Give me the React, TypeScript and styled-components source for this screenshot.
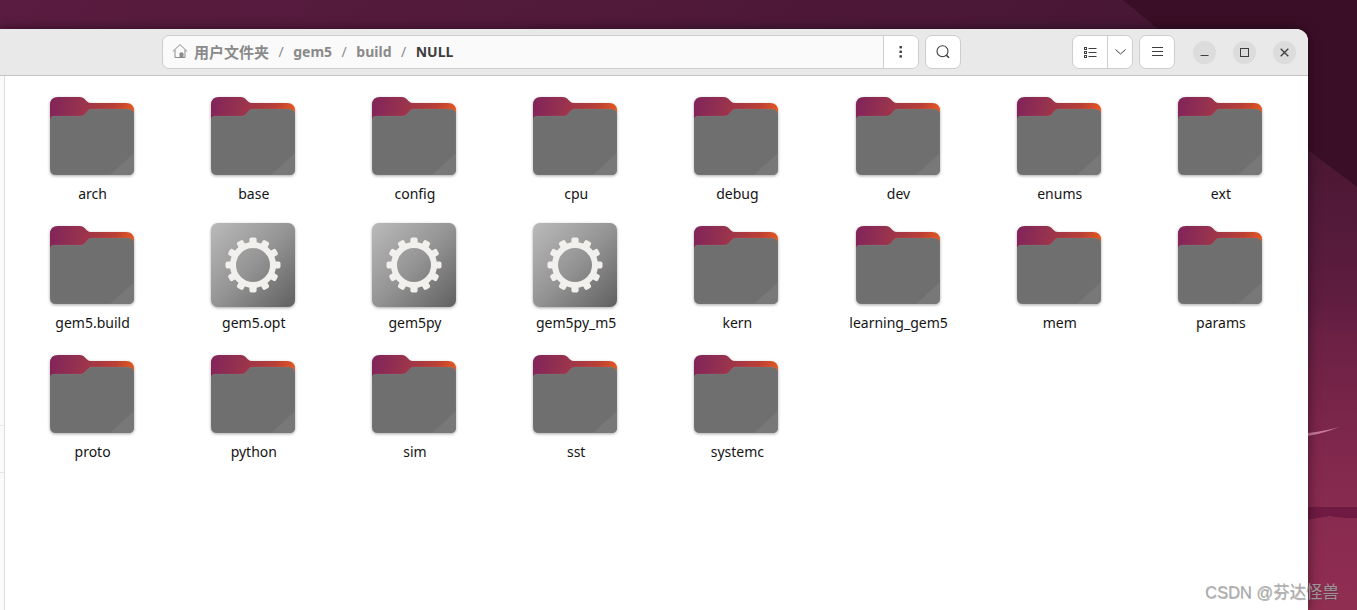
import React from "react";
import styled, { createGlobalStyle } from "styled-components";

const Global = createGlobalStyle`
  html, body { margin: 0; padding: 0; width: 100%; height: 100%; overflow: hidden; }
  #root { width: 100%; height: 100%; }
`;

const Desktop = styled.div`
  position: relative;
  width: 1357px;
  height: 610px;
  overflow: hidden;
  display: flex;
  align-items: flex-start;
  padding-top: 29px;
  box-sizing: border-box;
  background: #3d0f28;
  font-family: "Noto Sans", "Noto Sans CJK SC", sans-serif;
`;

const Wallpaper = styled.svg`
  position: absolute;
  inset: 0;
  width: 1357px;
  height: 610px;
`;

const Window = styled.div`
  position: relative;
  width: 1308px;
  height: 581px;
  flex: none;
  display: flex;
  flex-direction: column;
  background: #fff;
  border-top-right-radius: 12px;
  overflow: hidden;
  box-shadow: 0 0 12px rgba(0, 0, 0, 0.5);
`;

const Header = styled.header`
  height: 47px;
  flex: none;
  display: flex;
  align-items: center;
  box-sizing: border-box;
  padding: 0 11px 0 162px;
  background: #e9e9e9;
  border-bottom: 1px solid #c4c4c4;
`;

const PathBar = styled.div`
  width: 757px;
  height: 34px;
  box-sizing: border-box;
  display: flex;
  border: 1px solid #cdcdcd;
  border-radius: 7px;
  overflow: hidden;
  background: #fafafa;
`;

const Crumbs = styled.div`
  flex: 1;
  display: flex;
  align-items: center;
  padding: 0 0 2px 9px;
  font-size: 14px;
  font-weight: 700;
  color: #8a8a8a;
`;

const HomeIcon = styled.svg`
  width: 16px;
  height: 16px;
  margin-right: 6px;
  flex: none;
`;

const HomeName = styled.span`
  font-size: 15px;
`;

const Sep = styled.span`
  font-weight: 400;
  margin: 0 9.5px;
`;

const Current = styled.span`
  color: #3d3d3d;
`;

const PathMenu = styled.div`
  width: 34px;
  flex: none;
  display: flex;
  align-items: center;
  justify-content: center;
  background: #fff;
  border-left: 1px solid #cdcdcd;
`;

const ToolButton = styled.div<{ $w: number; $ml: number }>`
  width: ${(p) => p.$w}px;
  margin-left: ${(p) => p.$ml}px;
  height: 34px;
  flex: none;
  box-sizing: border-box;
  display: flex;
  align-items: center;
  justify-content: center;
  background: #fff;
  border: 1px solid #cdcdcd;
  border-radius: 7px;
`;

const Split = styled.div`
  width: 61px;
  margin-left: 111px;
  height: 34px;
  flex: none;
  box-sizing: border-box;
  display: flex;
  background: #fff;
  border: 1px solid #cdcdcd;
  border-radius: 7px;
  overflow: hidden;
`;

const SplitPart = styled.div<{ $w: number; $line?: boolean }>`
  width: ${(p) => p.$w}px;
  flex: none;
  box-sizing: border-box;
  display: flex;
  align-items: center;
  justify-content: center;
  border-right: ${(p) => (p.$line ? "1px solid #cdcdcd" : "none")};
`;

const WinButton = styled.div<{ $ml: number }>`
  width: 23px;
  height: 23px;
  margin-left: ${(p) => p.$ml}px;
  flex: none;
  border-radius: 50%;
  background: #dcdcdc;
  display: flex;
  align-items: center;
  justify-content: center;
`;

const Body = styled.div`
  flex: 1;
  display: flex;
  min-height: 0;
`;

const Sidebar = styled.aside`
  width: 5px;
  flex: none;
  box-sizing: border-box;
  background: #fafafa;
  border-right: 1px solid #dedede;
  display: flex;
  flex-direction: column;
  padding-top: 349px;
`;

const SideRow = styled.div`
  height: 47px;
  flex: none;
  box-sizing: border-box;
  border-top: 1px solid #e6e6e6;
`;

const Grid = styled.main`
  flex: 1;
  display: grid;
  grid-template-columns: repeat(8, 161.2px);
  grid-auto-rows: 129px;
  align-content: start;
  padding: 17px 0 0 7px;
`;

const Item = styled.div`
  display: flex;
  flex-direction: column;
  align-items: center;
`;

const IconSlot = styled.svg`
  width: 92px;
  height: 88px;
  flex: none;
  display: block;
  overflow: visible;
  filter: drop-shadow(0 1px 1.5px rgba(0, 0, 0, 0.35));
`;

const Label = styled.span`
  margin-top: 3px;
  font-size: 14px;
  line-height: 20px;
  color: #141414;
  white-space: nowrap;
`;

const Watermark = styled.div`
  position: absolute;
  left: 1205px;
  top: 581px;
  font-family: "Liberation Sans", "Noto Sans CJK SC", sans-serif;
  font-size: 16.5px;
  line-height: 22px;
  color: rgba(165, 165, 165, 0.85);
  text-shadow: 0.5px 0.5px 0.5px rgba(60, 60, 60, 0.35);
  white-space: nowrap;
`;

const FolderIcon = () => (
  <IconSlot viewBox="1 0 92 88">
    <path
      d="M4 12 Q4 4 12 4 H34 Q36.5 4 38 5.5 L41 8.5 Q42.5 10 45 10 H80 Q88 10 88 18 V40 H4 Z"
      fill="url(#folderBack)"
    />
    <path
      d="M8 23 H35 Q37 23 38.5 21.6 L42 17.4 Q43.5 16 46 16 H82 Q88 16 88 22 V76 Q88 82 82 82 H10 Q4 82 4 76 V27 Q4 23 8 23 Z"
      fill="#6f6f6f"
      stroke="rgba(255,255,255,0.1)"
      strokeWidth="0.6"
    />
    <path d="M64 82 L88 60 V76 Q88 82 82 82 Z" fill="#787878" />
  </IconSlot>
);

const teeth = Array.from({ length: 12 }, (_, i) => i * 30);

const GearIcon = () => (
  <IconSlot viewBox="1 0 92 88">
    <rect x="4" y="1" width="84" height="84" rx="7" fill="url(#gearBg)" />
    <g fill="#f1f0ec">
      {teeth.map((a) => (
        <rect key={a} x="42.4" y="15.5" width="7.2" height="9" rx="2" transform={`rotate(${a} 46 43)`} />
      ))}
    </g>
    <circle cx="46" cy="43" r="20" fill="none" stroke="#f1f0ec" strokeWidth="6" />
  </IconSlot>
);

type Entry = { name: string; kind?: "gear" };
const entries: Entry[] = [
  { name: "arch" }, { name: "base" }, { name: "config" }, { name: "cpu" },
  { name: "debug" }, { name: "dev" }, { name: "enums" }, { name: "ext" },
  { name: "gem5.build" }, { name: "gem5.opt", kind: "gear" }, { name: "gem5py", kind: "gear" },
  { name: "gem5py_m5", kind: "gear" }, { name: "kern" }, { name: "learning_gem5" },
  { name: "mem" }, { name: "params" }, { name: "proto" }, { name: "python" },
  { name: "sim" }, { name: "sst" }, { name: "systemc" },
];

export default function App() {
  return (
    <Desktop>
      <Global />
      <Wallpaper viewBox="0 0 1357 610">
        <defs>
          <linearGradient id="wallTop" x1="0" y1="0" x2="1" y2="0">
            <stop offset="0" stopColor="#5a1c40" />
            <stop offset="1" stopColor="#481735" />
          </linearGradient>
          <linearGradient id="wallRight" gradientUnits="userSpaceOnUse" x1="0" y1="150" x2="0" y2="610">
            <stop offset="0" stopColor="#4a1733" />
            <stop offset="0.33" stopColor="#5f1d40" />
            <stop offset="0.4" stopColor="#6b2044" />
            <stop offset="0.7" stopColor="#84294e" />
            <stop offset="1" stopColor="#902e51" />
          </linearGradient>
          <linearGradient id="folderBack" gradientUnits="userSpaceOnUse" x1="4" y1="4" x2="88" y2="24">
            <stop offset="0" stopColor="#80235a" />
            <stop offset="0.35" stopColor="#96324f" />
            <stop offset="0.75" stopColor="#b83f36" />
            <stop offset="1" stopColor="#e8591d" />
          </linearGradient>
          <linearGradient id="gearBg" x1="0" y1="0" x2="1" y2="1">
            <stop offset="0" stopColor="#bababa" />
            <stop offset="0.5" stopColor="#949494" />
            <stop offset="1" stopColor="#606060" />
          </linearGradient>
        </defs>
        <rect width="1357" height="610" fill="#3b0e27" />
        <path d="M0 0 H1123 L1158 29 H0 Z" fill="url(#wallTop)" />
        <path d="M1300 144 L1357 187 V610 H1300 Z" fill="url(#wallRight)" />
        <path d="M1308 433 Q1325 431 1339 427 Q1325 433 1308 436 Z" fill="#c77ba0" />
        <path d="M1300 507 H1357 V518 Q1340 518 1330 516 Q1318 518 1300 521 Z" fill="#6f1a43" />
      </Wallpaper>
      <Window>
        <Header>
          <PathBar>
            <Crumbs>
              <HomeIcon viewBox="0 0 16 16" fill="none" stroke="#8a8a8a" strokeWidth="1">
                <path d="M0.8 8.5 L8 1.6 L15.2 8.5" />
                <path d="M3 7 V14.5 H13 V7" />
                <path d="M8 14.5 V10 H11 V14.5" fill="#8a8a8a" />
              </HomeIcon>
              <HomeName>用户文件夹</HomeName>
              <Sep>/</Sep>
              gem5
              <Sep>/</Sep>
              build
              <Sep>/</Sep>
              <Current>NULL</Current>
            </Crumbs>
            <PathMenu>
              <svg width="4" height="12" viewBox="0 0 4 12" fill="#3d3d3d">
                <rect x="0.5" y="0" width="2.4" height="2.4" />
                <rect x="0.5" y="4.6" width="2.4" height="2.4" />
                <rect x="0.5" y="9.2" width="2.4" height="2.4" />
              </svg>
            </PathMenu>
          </PathBar>
          <ToolButton $w={36} $ml={6}>
            <svg width="14" height="14" viewBox="0 0 14 14" fill="none" stroke="#3d3d3d" strokeWidth="1.1">
              <circle cx="6.5" cy="6.2" r="5.5" />
              <path d="M10.4 10.2 L13 12.8" strokeWidth="1.6" />
            </svg>
          </ToolButton>
          <Split>
            <SplitPart $w={35} $line>
              <svg width="13" height="11" viewBox="0 0 13 11" fill="none" stroke="#3d3d3d" strokeWidth="1">
                <rect x="0.5" y="0.5" width="2" height="2" />
                <rect x="0.5" y="4.5" width="2" height="2" />
                <rect x="0.5" y="8.5" width="2" height="2" />
                <path d="M4.5 1.5 H12.5 M4.5 5.5 H12.5 M4.5 9.5 H12.5" />
              </svg>
            </SplitPart>
            <SplitPart $w={24}>
              <svg width="11" height="6" viewBox="0 0 11 6" fill="none" stroke="#3d3d3d" strokeWidth="1">
                <path d="M0.5 0.5 L5.5 5 L10.5 0.5" />
              </svg>
            </SplitPart>
          </Split>
          <ToolButton $w={36} $ml={6}>
            <svg width="11" height="10" viewBox="0 0 11 10" fill="none" stroke="#3d3d3d" strokeWidth="1">
              <path d="M0 0.5 H11 M0 4.5 H11 M0 8.5 H11" />
            </svg>
          </ToolButton>
          <WinButton $ml={18}>
            <svg width="9" height="9" viewBox="0 0 9 9" fill="none" stroke="#3d3d3d" strokeWidth="1">
              <path d="M0.5 7.5 H8.5" />
            </svg>
          </WinButton>
          <WinButton $ml={17}>
            <svg width="9" height="9" viewBox="0 0 9 9" fill="none" stroke="#3d3d3d" strokeWidth="1">
              <rect x="0.5" y="0.5" width="8" height="8" />
            </svg>
          </WinButton>
          <WinButton $ml={17}>
            <svg width="9" height="9" viewBox="0 0 9 9" fill="none" stroke="#3d3d3d" strokeWidth="1.3">
              <path d="M0.7 0.7 L8.3 8.3 M8.3 0.7 L0.7 8.3" />
            </svg>
          </WinButton>
        </Header>
        <Body>
          <Sidebar>
            <SideRow />
            <SideRow />
          </Sidebar>
          <Grid>
            {entries.map((e) => (
              <Item key={e.name}>
                {e.kind === "gear" ? <GearIcon /> : <FolderIcon />}
                <Label>{e.name}</Label>
              </Item>
            ))}
          </Grid>
        </Body>
      </Window>
      <Watermark>CSDN @芬达怪兽</Watermark>
    </Desktop>
  );
}
